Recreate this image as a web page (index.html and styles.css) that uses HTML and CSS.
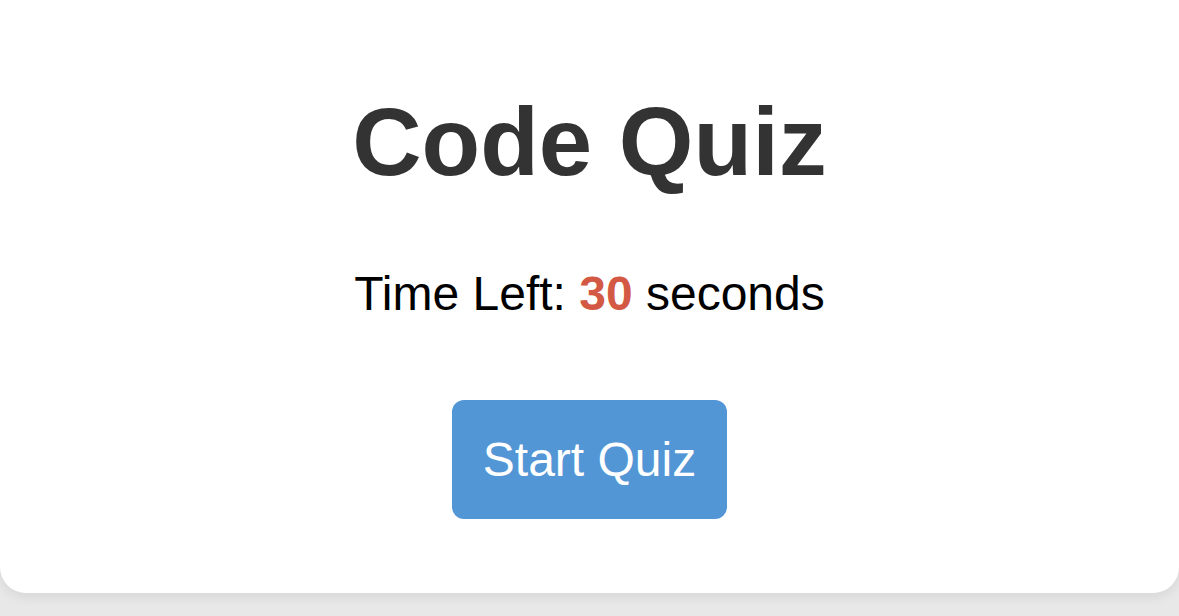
FILE: index.html
```html
<!DOCTYPE html>
<html lang="en">
<head>
<meta charset="utf-8">
<title>Code Quiz</title>
<link rel="stylesheet" href="styles.css">
</head>
<body>
  <main class="card">
    <h1 class="title">Code Quiz</h1>
    <p class="timer">Time Left: <span class="time">30</span> seconds</p>
    <button class="start-btn" type="button">Start Quiz</button>
  </main>
</body>
</html>
```
FILE: styles.css
```css
html, body {
  margin: 0;
  padding: 0;
}
body {
  background: #e8e8e8;
  font-family: "Liberation Sans", Arial, sans-serif;
  height: 616px;
  overflow: hidden;
}
.card {
  background: #ffffff;
  height: 593px;
  box-sizing: border-box;
  padding-top: 87px;
  border-radius: 0 0 26px 26px;
  box-shadow: 0 4px 12px rgba(0, 0, 0, 0.08);
  display: flex;
  flex-direction: column;
  align-items: center;
}
.title {
  margin: 0;
  font-size: 96px;
  line-height: 1.15;
  font-weight: bold;
  color: #333333;
}
.timer {
  margin: 69px 0 0;
  font-size: 48px;
  line-height: 1.15;
  color: #000000;
}
.time {
  font-weight: bold;
  color: #d35944;
}
.start-btn {
  margin-top: 78px;
  font-family: "Liberation Sans", Arial, sans-serif;
  font-size: 48px;
  line-height: 1.15;
  color: #ffffff;
  background: #5296d6;
  border: none;
  border-radius: 12px;
  padding: 32px 31px;
  cursor: pointer;
}
```
